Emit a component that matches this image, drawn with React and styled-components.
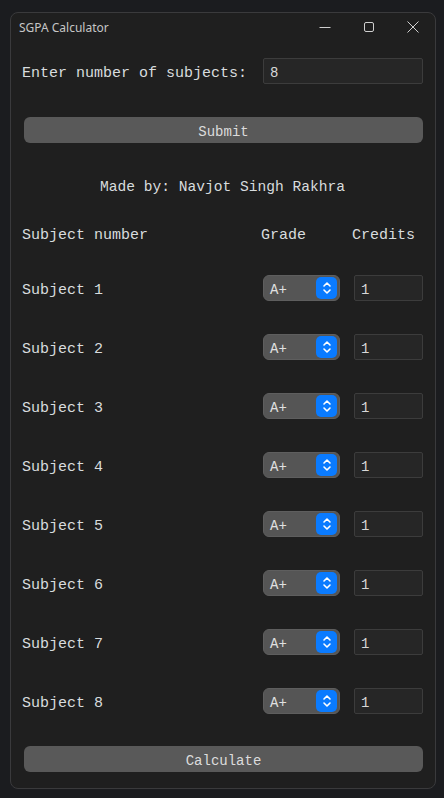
import React from 'react';
import styled, { createGlobalStyle } from 'styled-components';

const GlobalStyle = createGlobalStyle`
  html, body {
    margin: 0;
    padding: 0;
    background: #1b1c1f;
  }
  body {
    font-family: "Liberation Mono", "Courier New", monospace;
  }
`;

const Window = styled.div`
  box-sizing: border-box;
  width: 426px;
  height: 777px;
  margin: 12px 0 0 10px;
  border: 1px solid #3a3a3c;
  border-radius: 8px;
  background: #1f1f1f;
  display: flex;
  flex-direction: column;
  overflow: hidden;
`;

const TitleBar = styled.div`
  height: 28px;
  display: flex;
  align-items: center;
  padding-left: 8px;
`;

const Title = styled.span`
  flex: 1;
  font-family: "Noto Sans", "Open Sans", sans-serif;
  font-size: 12px;
  color: #c6c6c6;
`;

const Controls = styled.div`
  display: flex;
  align-items: center;
  height: 100%;
`;

const ControlButton = styled.div`
  width: 44px;
  height: 100%;
  display: flex;
  align-items: center;
  justify-content: center;
  color: #cfcfcf;
`;

const Content = styled.div`
  display: flex;
  flex-direction: column;
  padding: 17px 12px 0 11px;
  color: #d8dcde;
  font-size: 15px;
`;

const TopRow = styled.div`
  display: flex;
  align-items: center;
  justify-content: space-between;
`;

const Label = styled.span`
  line-height: 18px;
  padding-top: 6px;
  white-space: pre;
`;

const TextInput = styled.div`
  box-sizing: border-box;
  width: ${({ $w }) => $w}px;
  height: 26px;
  background: #262626;
  border: 1px solid #3c3c3c;
  border-radius: 2px;
  display: flex;
  align-items: center;
  padding: 3px 0 0 6px;
  font-size: 14px;
  color: #d8d8d8;
`;

const Button = styled.div`
  box-sizing: border-box;
  margin: ${({ $top }) => $top}px 0 0 2px;
  width: 399px;
  height: 26px;
  padding-top: 3px;
  border-radius: 6px;
  background: #595959;
  display: flex;
  align-items: center;
  justify-content: center;
  font-size: 14px;
  color: #dcdcdc;
`;

const Credit = styled.div`
  margin-top: 35px;
  text-align: center;
  line-height: 18px;
  font-size: 14.6px;
`;

const Grid = styled.div`
  display: grid;
  grid-template-columns: 1fr 77px 69px;
  grid-template-rows: ${({ $h }) => $h}px;
  column-gap: 14px;
  align-items: center;
  margin-top: ${({ $top }) => $top}px;
`;

const HeadCell = styled.span`
  line-height: 18px;
  margin-left: ${({ $shift }) => $shift || 0}px;
  white-space: pre;
`;

const Select = styled.div`
  box-sizing: border-box;
  height: 26px;
  border-radius: 6px;
  background: #555555;
  border: 1px solid #5e5e5e;
  display: flex;
  align-items: center;
  justify-content: space-between;
  padding: 0 2px 0 6px;
  font-size: 14px;
  color: #e0e0e0;
`;

const SelectText = styled.span`
  padding-top: 3px;
`;

const Stepper = styled.div`
  width: 21px;
  height: 22px;
  border-radius: 5px;
  background: #0a7bff;
  display: flex;
  align-items: center;
  justify-content: center;
`;

const subjects = [1, 2, 3, 4, 5, 6, 7, 8];

const Chevrons = () => (
  <svg width="10" height="16" viewBox="0 0 10 16" fill="none" stroke="#fff" strokeWidth="1.6" strokeLinecap="round" strokeLinejoin="round">
    <path d="M2 6 L5 3 L8 6" />
    <path d="M2 10 L5 13 L8 10" />
  </svg>
);

const App = () => (
  <>
    <GlobalStyle />
    <Window>
      <TitleBar>
        <Title>SGPA Calculator</Title>
        <Controls>
          <ControlButton>
            <svg width="12" height="12" viewBox="0 0 12 12" stroke="currentColor" strokeWidth="1">
              <path d="M0.5 6.5 H11.5" />
            </svg>
          </ControlButton>
          <ControlButton>
            <svg width="12" height="12" viewBox="0 0 12 12" fill="none" stroke="currentColor" strokeWidth="1">
              <rect x="1.5" y="1.5" width="9" height="9" rx="1.5" />
            </svg>
          </ControlButton>
          <ControlButton>
            <svg width="12" height="12" viewBox="0 0 12 12" fill="none" stroke="currentColor" strokeWidth="1">
              <path d="M0.5 0.5 L11.5 11.5 M11.5 0.5 L0.5 11.5" />
            </svg>
          </ControlButton>
        </Controls>
      </TitleBar>
      <Content>
        <TopRow>
          <Label>Enter number of subjects:</Label>
          <TextInput $w={160}>8</TextInput>
        </TopRow>
        <Button $top={33}>Submit</Button>
        <Credit>Made by: Navjot Singh Rakhra</Credit>
        <Grid $top={31} $h={18}>
          <HeadCell>Subject number</HeadCell>
          <HeadCell $shift={-2}>Grade</HeadCell>
          <HeadCell $shift={-2}>Credits</HeadCell>
        </Grid>
        {subjects.map((n) => (
          <Grid key={n} $top={n === 1 ? 30 : 33} $h={26}>
            <Label>Subject {n}</Label>
            <Select>
              <SelectText>A+</SelectText>
              <Stepper>
                <Chevrons />
              </Stepper>
            </Select>
            <TextInput $w={69}>1</TextInput>
          </Grid>
        ))}
        <Button $top={32}>Calculate</Button>
      </Content>
    </Window>
  </>
);

export default App;
